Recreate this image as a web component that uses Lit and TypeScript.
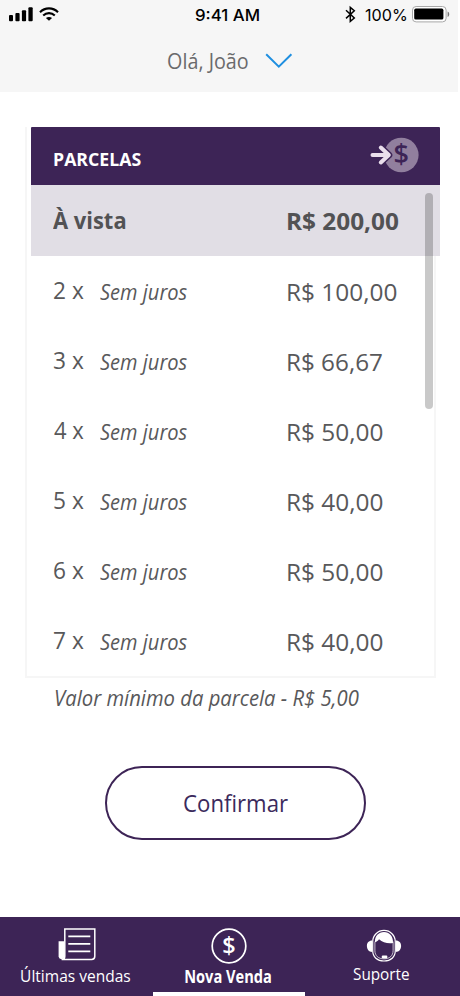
import { LitElement, html, css } from "lit";
import { customElement, property, query } from "lit/decorators.js";

/** A single line of text whose visible width is fitted to the given width. */
@customElement("fit-text")
class FitText extends LitElement {
  static styles = css`
    :host { display: block; white-space: nowrap; flex: none; }
    .ink { display: inline-block; transform-origin: 0 50%; }
  `;
  @property({ type: Number }) width = 0;
  @property() text = "";
  @query(".ink") ink!: HTMLElement;

  render() {
    return html`<span class="ink">${this.text}</span>`;
  }

  updated() {
    const cs = getComputedStyle(this.ink);
    const ctx = document.createElement("canvas").getContext("2d")!;
    ctx.font = `${cs.fontStyle} ${cs.fontWeight} ${cs.fontSize} ${cs.fontFamily}`;
    const m = ctx.measureText(this.text);
    const scale = this.width / (m.actualBoundingBoxLeft + m.actualBoundingBoxRight);
    this.style.width = `${this.width}px`;
    this.ink.style.transform = `translateX(${m.actualBoundingBoxLeft * scale}px) scaleX(${scale})`;
  }
}

interface Installment {
  times: number;
  price: string;
  width: number;
}

const installments: Installment[] = [
  { times: 2, price: "R$ 100,00", width: 109 },
  { times: 3, price: "R$ 66,67", width: 94.5 },
  { times: 4, price: "R$ 50,00", width: 95 },
  { times: 5, price: "R$ 40,00", width: 95 },
  { times: 6, price: "R$ 50,00", width: 95 },
  { times: 7, price: "R$ 40,00", width: 95 },
];

const signalIcon = html`<svg class="signal" width="24" height="15" viewBox="0 0 24 15">
  <rect x="0" y="8" width="4" height="6.3" rx="1" />
  <rect x="6.4" y="6" width="4.2" height="8.3" rx="1" />
  <rect x="12.9" y="3.3" width="4.2" height="11" rx="1" />
  <rect x="19.4" y="0.2" width="4.3" height="14.1" rx="1" />
</svg>`;

const wifiIcon = html`<svg class="wifi" width="20" height="15" viewBox="0 0 20 15" fill="none" stroke="#000" stroke-width="2.1">
  <path d="M1 5.2C6 .1 14 .1 19 5.2" />
  <path d="M4.2 8.5c3.3-3.2 8.3-3.2 11.6 0" />
  <path d="M6.9 11c1.8-1.5 4.4-1.5 6.2 0L10 13.8z" fill="#000" stroke="none" />
</svg>`;

const bluetoothIcon = html`<svg class="bluetooth" width="11" height="17" viewBox="0 0 11 17" fill="none" stroke="#000" stroke-width="1.5">
  <path d="M1 4.3l8.3 7.7-4 3.4V1.4l4 3.4L1 12.4" />
</svg>`;

const batteryIcon = html`<svg class="battery" width="38" height="17" viewBox="0 0 38 17">
  <rect x="0.5" y="0.5" width="33.6" height="15.4" rx="3.6" fill="#fff" stroke="#a9a9a9" />
  <rect x="2.2" y="2.6" width="29.2" height="11" rx="1.6" />
  <path d="M35.6 5.5c2.2.8 2.2 4.7 0 5.5z" fill="#777" />
</svg>`;

const chevronIcon = html`<svg class="chevron" width="28" height="16" viewBox="0 0 28 16" fill="none" stroke="#1f8fe0" stroke-width="2">
  <path d="M1.2 1.2L13.8 13.6 26.4 1.2" />
</svg>`;

const payIcon = html`<svg class="pay" width="50" height="44" viewBox="0 -4 50 44">
  <circle cx="31.3" cy="18" r="17.3" fill="#917f9e" />
  <path d="M2.5 18H18.5M10.8 10.5l8 7.5-8 7.5" fill="none" stroke="#3d2456" stroke-width="7" stroke-linecap="round" stroke-linejoin="round" />
  <path d="M2.5 18H18.5M10.8 10.5l8 7.5-8 7.5" fill="none" stroke="#eadfec" stroke-width="4" stroke-linecap="round" stroke-linejoin="round" />
  <text class="coin" x="31.3" y="27.4" font-size="27" fill="#3d2456">$</text>
</svg>`;

const newsIcon = html`<svg width="38" height="33" viewBox="0 0 38 33" fill="none" stroke="#fff" stroke-width="1.5">
  <path d="M6.8 1h30v27.3a3.2 3.2 0 0 1-3.2 3.2H3.6c2 0 3.2-1.2 3.2-3.2z" />
  <path d="M6.5 13.3H.6v15.5a3 3 0 0 0 5.9 0z" fill="#fff" stroke="none" />
  <path d="M10.3 8.3h22M10.3 15.8h22M10.3 23.3h22" stroke-width="1.7" />
</svg>`;

const coinIcon = html`<svg width="36" height="36" viewBox="0 0 36 36">
  <circle cx="18" cy="18" r="16.8" fill="none" stroke="#fff" stroke-width="1.7" />
  <text class="coin" x="18" y="26.2" font-size="23.5" fill="#fff">$</text>
</svg>`;

const supportIcon = html`<svg width="36" height="33" viewBox="0 0 36 33">
  <path d="M6.2 11.6C2.8 11.6.9 14 .9 17s2 6 5.3 6zM29.8 11.6c3.4 0 5.3 2.4 5.3 5.4s-2 6-5.3 6z" fill="#fff" />
  <path d="M6.7 21.5V12.7a11.3 11.3 0 0 1 22.6 0v8.800c0 6.500-4.500 10.500-11.300 10.500S6.700 28 6.700 21.500z" fill="#3d2456" stroke="#fff" stroke-width="1.2" />
  <path d="M9 13.200c-.4-6 3.600-10.200 9-10.200s9.400 4.200 9 11c-5.600.8-10.300-.6-14-3.800-.8 1.400-2.200 2.500-4 3z" fill="#fff" />
  <path d="M8.900 12.500v9.200c0 5 3.600 8.200 9.100 8.200s9.100-3.200 9.100-8.200v-9.200" fill="none" stroke="#fff" stroke-width="0.7" />
  <rect x="15.700" y="26.600" width="5.700" height="2.800" rx="1.100" fill="#fff" />
</svg>`;

@customElement("app-root")
class AppRoot extends LitElement {
  static styles = css`
    :host {
      display: flex; flex-direction: column; width: 460px; height: 996px; overflow: hidden;
      background: #fff; color: #58585a; font-family: "Open Sans", "Noto Sans", sans-serif;
    }
    * { box-sizing: border-box; }
    svg { display: block; flex: none; overflow: visible; }
    .coin { font-family: "Open Sans", sans-serif; font-weight: 600; text-anchor: middle; }

    .top { width: 458px; height: 92px; background: #f6f6f6; flex: none; }
    .status { display: flex; align-items: center; height: 30px; padding-left: 9px; color: #000;
      font: 500 16px/30px Inter, sans-serif; }
    .signal { margin-top: -1px; }
    .wifi { margin: -1px 136px 0 6px; }
    .bluetooth { margin: -2px 9px 0 85.5px; }
    .battery { margin: -1px 0 0 6px; }
    .percent { font-weight: 400; }
    .user { display: flex; align-items: center; gap: 16px; height: 62px; padding-left: 168px;
      font-size: 22px; line-height: 60px; color: #6a6a6c; }
    .user fit-text { margin-top: -2px; }

    .card { width: 411.5px; height: 550.5px; margin: 35px 0 0 24.5px;
      border: solid #f6f6f6; border-width: 0 2px 2px 2px; flex: none; position: relative; }
    .head, .row { display: flex; align-items: center; }
    .head, .selected { width: 409.3px; margin-left: 4.5px; }
    .head { justify-content: space-between; height: 57.5px; padding: 0 20px 0 22.5px; background: #3d2456;
      color: #fff; font-size: 18.5px; font-weight: 700; line-height: 57px; border-radius: 1px 1px 0 0; }
    .head fit-text { padding-top: 5px; }
    .head .pay { margin-top: -2px; }
    .row { height: 70px; padding: 1px 0 0 27px; font-size: 23.5px; line-height: 70px; }
    .selected { height: 71.5px; padding: 2px 0 0 22px; background: #e1dee5; font-weight: 700;
      line-height: 69px; color: #525254; }
    .label { width: 234.6px; display: flex; gap: 16.8px; flex: none; }
    .times { margin-top: -1px; }
    .selected .times { margin-top: -2px; }
    .note { font-size: 21.5px; font-style: italic; margin-top: 1px; }
    .thumb { position: absolute; right: 1.5px; top: 65.5px; width: 7.5px; height: 216px;
      border-radius: 4px; background: rgba(0, 0, 0, 0.21); }

    .minimum { margin: 4px 0 0 55.5px; font-size: 21.5px; line-height: 31px; font-style: italic; }
    .confirm { display: flex; justify-content: center; align-items: center; width: 261px; height: 74px;
      margin: 53.5px 0 0 105px; padding: 0; border: 2px solid #3d2456; border-radius: 37px; background: #fff;
      color: #3b2a5c; font: 400 24.5px/68px "Open Sans", sans-serif; flex: none; }

    .nav { display: grid; grid-template-columns: repeat(3, 152.7px); height: 79px; margin-top: auto;
      background: #3d2456; color: #fff; font-size: 17.2px; line-height: 24px; flex: none; }
    .tab { display: flex; flex-direction: column; align-items: center; padding: 10.5px 1px 0 0; }
    .icon { height: 36.5px; }
    .active { font-weight: 700; border-bottom: 4.5px solid #fff; }
    .active fit-text { margin-top: 1px; }
    .news .icon { padding: 0.5px 0 0 2.5px; }
    .help .icon { height: 34px; padding: 1.7px 0 0 6.5px; }
  `;

  render() {
    return html`
      <header class="top">
        <div class="status">
          ${signalIcon}${wifiIcon}
          <fit-text width="64.5" text="9:41 AM"></fit-text>
          ${bluetoothIcon}
          <fit-text class="percent" width="41" text="100%"></fit-text>
          ${batteryIcon}
        </div>
        <div class="user"><fit-text width="80.5" text="Olá, João"></fit-text>${chevronIcon}</div>
      </header>
      <section class="card">
        <div class="head"><fit-text width="87" text="PARCELAS"></fit-text>${payIcon}</div>
        <div class="row selected">
          <div class="label"><fit-text class="times" width="72.5" text="À vista"></fit-text></div>
          <fit-text width="110.5" text="R$ 200,00"></fit-text>
        </div>
        ${installments.map((i) => html`
          <div class="row">
            <div class="label">
              <fit-text class="times" width="29.5" text="${i.times} x"></fit-text>
              <fit-text class="note" width="87" text="Sem juros"></fit-text>
            </div>
            <fit-text width=${i.width} text=${i.price}></fit-text>
          </div>`)}
        <div class="thumb"></div>
      </section>
      <div class="minimum"><fit-text width="303" text="Valor mínimo da parcela - R$ 5,00"></fit-text></div>
      <button class="confirm"><fit-text width="104" text="Confirmar"></fit-text></button>
      <nav class="nav">
        <div class="tab news"><div class="icon">${newsIcon}</div><fit-text width="109.5" text="Últimas vendas"></fit-text></div>
        <div class="tab active"><div class="icon">${coinIcon}</div><fit-text width="86.5" text="Nova Venda"></fit-text></div>
        <div class="tab help"><div class="icon">${supportIcon}</div><fit-text width="56" text="Suporte"></fit-text></div>
      </nav>
    `;
  }
}
